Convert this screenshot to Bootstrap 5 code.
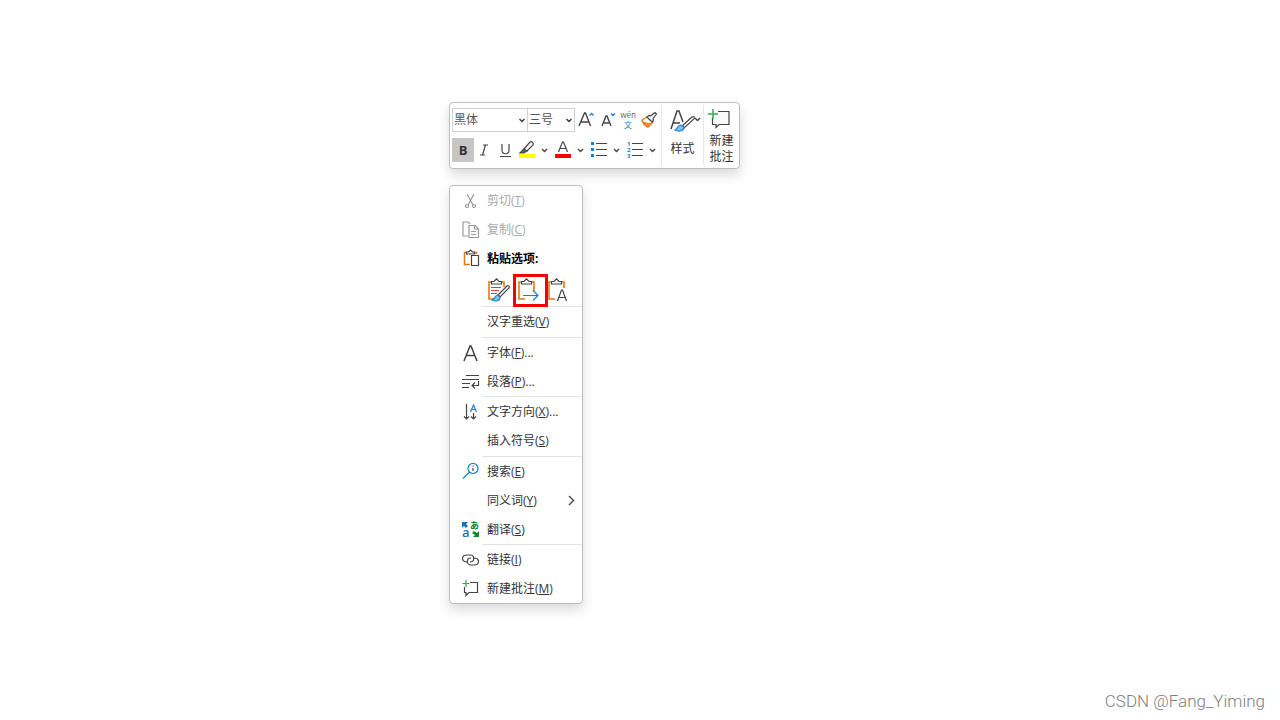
<!DOCTYPE html>
<html lang="zh-CN">
<head>
<meta charset="utf-8">
<meta name="viewport" content="width=device-width, initial-scale=1">
<title>右键菜单</title>
<link href="https://cdn.jsdelivr.net/npm/bootstrap@5.3.0/dist/css/bootstrap.min.css" rel="stylesheet">
<style>
  body { font: 12px/16px "Open Sans", "Noto Sans CJK SC", sans-serif; color: #333; background: #fff; }
  .stage { padding: 102px 16px 0 calc(35% + 1px); }
  .panel { width: fit-content; background: #fff; border: 1px solid #bdbdbd; border-radius: 4px; box-shadow: 0 6px 12px rgba(0,0,0,.14); }
  svg { display: block; flex: none; fill: none; stroke: #444; stroke-width: 1.2; }
  button { color: inherit; background: none; border: 0; padding: 0; font: inherit; }
  .tools { padding: 5px 0 6px 2px; }
  .tool-main { width: 209px; gap: 6px; }
  .tool-row { height: 24px; }
  .font-box { height: 24px; padding: 0 14px 0 1px; border: 1px solid #d0d0d0; border-radius: 0; font: inherit; color: #555; background-size: 8px 8px; background-position: right 1px center;
    background-image: url("data:image/svg+xml,%3Csvg xmlns='http://www.w3.org/2000/svg' viewBox='0 0 8 8'%3E%3Cpath d='M1.500 3L4 5.500 6.500 3' fill='none' stroke='%23333' stroke-width='1.3'/%3E%3C/svg%3E"); }
  .font-name { width: 76px; }
  .font-size { width: 48px; margin-left: -1px; }
  .tool { width: 21px; height: 24px; display: flex; align-items: center; justify-content: center; }
  .tool.active { width: 22px; background: #c6c6c6; font-size: 13px; }
  .split { width: 36px; height: 24px; display: flex; align-items: center; }
  .big { width: 36px; border-left: 1px solid #e8e8e8; margin: -3px 0; }
  .big.wide { width: 42px; }
  .ctx { width: 134px; margin-top: 16px; }
  .entry { display: flex; align-items: center; width: 100%; height: 29px; padding-left: 12px; text-align: left; white-space: nowrap; }
  .entry.tall { height: 30px; }
  .entry .pic { width: 25px; flex: none; }
  .entry:disabled { color: #a9a9a9; }
  .rule { margin: 0 0 0 32px; border: 0; border-top: 1px solid #e2e2e2; opacity: 1; }
  .paste-row { height: 33px; padding-left: 34px; }
  .paste { width: 30px; height: 33px; padding-left: 2px; position: relative; }
  .paste.marked::after { content: ""; position: absolute; inset: 1px -4px -1px -1px; border: 3px solid #f40000; }
  .sign { font: 300 17px/20px Roboto, sans-serif; color: #808080; right: 15px; bottom: 9px; }
</style>
</head>
<body>
<main class="stage min-vh-100">
  <div class="panel tools d-flex" role="toolbar" aria-label="格式">
    <div class="tool-main d-flex flex-column">
      <div class="tool-row d-flex">
        <select class="form-select font-box font-name" aria-label="字体"><option>黑体</option></select>
        <select class="form-select font-box font-size" aria-label="字号"><option>三号</option></select>
        <button class="tool" aria-label="增大字号"><svg width="18" height="18"><path d="M2 15L7.500 2h1l5 13M4 11h8" stroke-width="1.4"/><path d="M12.500 4.500l2-2 2 2" stroke="#1683d0" stroke-width="1.4"/></svg></button>
        <button class="tool" aria-label="减小字号"><svg width="18" height="18"><path d="M4 15L8 5h1l4 10M6 12h5" stroke-width="1.4"/><path d="M13 2.500l2 2 2-2" stroke="#1683d0" stroke-width="1.4"/></svg></button>
        <button class="tool" aria-label="拼音指南"><svg width="20" height="20"><g font-family="Noto Sans CJK SC" stroke="none" text-anchor="middle"><text x="10" y="8" font-size="8" fill="#666">wén</text><text x="10" y="18" font-size="8" fill="#1683d0">文</text></g></svg></button>
        <button class="tool" aria-label="格式刷"><svg width="18" height="18"><path d="M7 6L2 9c1 4 4 6 6 7l5-5z" fill="#fff" stroke="#e87813" stroke-width="1.400"/><path d="M4 11.500l6.500 1.500L8 16c-2-1-3-2-4-4.500z" fill="#f5a04c" stroke="#e87813"/><path d="M7 6l2-1.500 1.500.5 4.500-3.500L16.500 3 13 7.500l.5 1.500-1.500 2z" fill="#fff"/></svg></button>
      </div>
      <div class="tool-row d-flex">
        <button class="tool active fw-bold" aria-label="加粗">B</button>
        <button class="tool" aria-label="倾斜"><svg width="12" height="14"><path d="M4 2h5M1 12h5M6.500 2l-3 10"/></svg></button>
        <button class="tool" aria-label="下划线"><svg width="12" height="16"><path d="M2 2v6c0 5 7 5 7 0V2M0 14.500h11"/></svg></button>
        <button class="split" aria-label="突出显示"><svg width="36" height="20"><path d="M3 14h16v4H3z" fill="#ff0" stroke="none"/><path d="M8 9l6-7c2-1 4 1 3 3l-6 6-4 1z" fill="#fff"/><path d="M8 9l3 2-3 2H4z" fill="#666"/><path d="M26 9l2.500 2.500L31 9" stroke-width="1.4"/></svg></button>
        <button class="split" aria-label="字体颜色"><svg width="36" height="20"><path d="M3 14h16v4H3z" fill="#f00" stroke="none"/><path d="M6.500 12l4-10h1l4 10M8 8.500h6"/><path d="M26 9l2.500 2.500L31 9" stroke-width="1.4"/></svg></button>
        <button class="split" aria-label="项目符号"><svg width="36" height="20"><path d="M3 2h3v3H3zM3 8h3v3H3zM3 14h3v3H3z" fill="#1683d0" stroke="none"/><path d="M8 3.500h11M8 9.500h11M8 15.500h11"/><path d="M26 9l2.500 2.500L31 9" stroke-width="1.4"/></svg></button>
        <button class="split" aria-label="编号"><svg width="36" height="20"><g font-size="6" font-weight="700" fill="#1683d0" stroke="none"><text x="3" y="6">1</text><text x="3" y="12">2</text><text x="3" y="18">3</text></g><path d="M8 3.500h11M8 9.500h11M8 15.500h11"/><path d="M26 9l2.500 2.500L31 9" stroke-width="1.4"/></svg></button>
      </div>
    </div>
    <button class="big wide d-flex flex-column align-items-center"><svg width="36" height="32" viewBox="2 3 36 32"><path d="M8 27L14 9h2l4 11M10 21h7" stroke-width="1.5"/><path d="M29 15L19 24l2 2 10-9c1-2 0-3-2-2z" fill="#fff"/><path d="M18 23c-4 0-3 4-6 5 4 2 9 1 9-3z" fill="#83beec" stroke="#1683d0"/><path d="M32 16l2.500 2.500L37 16" stroke-width="1.400"/></svg><span class="mt-1">样式</span></button>
    <button class="big d-flex flex-column align-items-center"><svg width="28" height="28" viewBox="3 2 28 28"><path d="M13 8.500h11v13H14l-3 3v-3H7.500v-7" fill="#fafafa"/><path d="M8 6v10M3 11h10" stroke="#3ca653" stroke-width="1.5"/></svg><span>新建</span><span>批注</span></button>
  </div>

  <div class="panel ctx" role="menu">
    <button class="entry" disabled><span class="pic"><svg width="18" height="18"><path d="M5 2l6 11M12 2L6 13" stroke="#999"/><circle cx="5" cy="14" r="1.500" stroke="#999"/><circle cx="12" cy="14" r="1.500" stroke="#999"/></svg></span><span>剪切(<u>T</u>)</span></button>
    <button class="entry" disabled><span class="pic"><svg width="18" height="18"><path d="M6 15H1V1h5l2 2M7 4.500h6l3.500 3.500v8.500H7zM12.500 4.500V8h4M9 10.500h5M9 13.500h5" stroke="#999"/></svg></span><span>复制(<u>C</u>)</span></button>
    <div class="entry fw-bold text-black"><span class="pic"><svg width="18" height="20"><path d="M5 3.500H2.500v12H8M12 3.500h2.500V5" stroke="#e87813" stroke-width="1.500"/><path d="M4.500 5V3h2l2-2 2 2h2v2zM9.500 6.500h7v10h-7z" fill="#fff"/></svg></span><span>粘贴选项:</span></div>
    <div class="paste-row d-flex">
      <button class="paste" aria-label="保留源格式"><svg width="24" height="24"><path d="M6 4H3v17h6M15 4h3v5" stroke="#e87813" stroke-width="1.600"/><path d="M5.500 6V3.500H8L10.500.8 13 3.500h2.500V6z" fill="#fff"/><path d="M5 9.500h10M5 15.500h6" stroke="#1683d0"/><path d="M5 12.500h8" stroke="#e0533c"/><path d="M21 8l-9 9 2 2 9-9c1-2-1-3-2-2z" fill="#fff"/><path d="M12 17c-4 0-2 4-6 5 4 2 8 1 8-3z" fill="#83beec" stroke="#1683d0"/></svg></button>
      <button class="paste marked" aria-label="合并格式"><svg width="24" height="24"><path d="M6 4H3v17h6M15 4h3v9" stroke="#e87813" stroke-width="1.600"/><path d="M5.500 6V3.500H8L10.500.8 13 3.500h2.500V6z" fill="#fff"/><path d="M7 17.500h15M17 12.500l5 5-5 5" stroke="#1683d0"/></svg></button>
      <button class="paste" aria-label="只保留文本"><svg width="24" height="24"><path d="M6 4H3v17h6M15 4h3v6" stroke="#e87813" stroke-width="1.600"/><path d="M5.500 6V3.500H8L10.500.8 13 3.500h2.500V6z" fill="#fff"/><path d="M11.500 23l4-11h1l4 11M13 19.500h6"/></svg></button>
    </div>
    <hr class="rule">
    <button class="entry tall"><span class="pic"></span><span>汉字重选(<u>V</u>)</span></button>
    <hr class="rule">
    <button class="entry"><span class="pic"><svg width="18" height="18"><path d="M2 17L8 2h1l6 15M4 11.500h9" stroke-width="1.500"/></svg></span><span>字体(<u>F</u>)...</span></button>
    <button class="entry"><span class="pic"><svg width="18" height="18" viewBox="0 1 18 18"><path d="M4 3.500h13M0 7.500h17M0 11.500h8M0 15.500h7M16.500 9v4.500H10M13 10.500l-3 3 3 3"/></svg></span><span>段落(<u>P</u>)...</span></button>
    <hr class="rule">
    <button class="entry"><span class="pic"><svg width="18" height="18"><path d="M4.500 1v15M2 13.500l2.500 2.500L7 13.500M11.500 10v6M9 13.500l2.500 2.500 2.500-2.500"/><path d="M8.500 9l3-7 3 7M9.500 6.500h4" stroke="#1683d0"/></svg></span><span>文字方向(<u>X</u>)...</span></button>
    <button class="entry tall"><span class="pic"></span><span>插入符号(<u>S</u>)</span></button>
    <hr class="rule">
    <button class="entry"><span class="pic"><svg width="18" height="18" viewBox="0 1 18 18"><circle cx="11" cy="6.500" r="5" stroke="#1683d0"/><path d="M7.500 10L1 16.500" stroke="#1683d0"/><path d="M11 6v3M11 3.500v1"/></svg></span><span>搜索(<u>E</u>)</span></button>
    <button class="entry"><span class="pic"></span><span>同义词(<u>Y</u>)</span><svg class="ms-auto me-1" width="12" height="12"><path d="M3 1l4.500 4.500L3 10" stroke-width="1.400"/></svg></button>
    <button class="entry"><span class="pic"><svg class="overflow-visible" width="18" height="20"><g stroke="none"><text x="0" y="17" font-size="13" font-weight="600" fill="#1372c4">a</text><text x="8" y="9" font-size="9" font-weight="700" fill="#13852c">あ</text></g><path d="M0 2v6l2-2 2 2 2-2-2-2 2-2z" fill="#1372c4" stroke="none"/><path d="M17 17v-6l-2 2-3-2-2 2 3 2-2 2z" fill="#13852c" stroke="none"/></svg></span><span>翻译(<u>S</u>)</span></button>
    <hr class="rule">
    <button class="entry"><span class="pic"><svg width="18" height="18"><path d="M5 11C-1 11-1 4 5 4h3c5 0 5 7 0 7M12 7c6 0 6 7 0 7H9C4 14 4 7 9 7"/></svg></span><span>链接(<u>I</u>)</span></button>
    <button class="entry"><span class="pic"><svg width="18" height="18" viewBox="0 1 18 18"><path d="M8 3.500h7.500v10H7l-3 3v-3H2.500V8"/><path d="M4 1v7M.5 4.500h7" stroke="#3ca653"/></svg></span><span>新建批注(<u>M</u>)</span></button>
  </div>
</main>
<div class="sign position-absolute">CSDN @Fang_Yiming</div>
<script src="https://cdn.jsdelivr.net/npm/bootstrap@5.3.0/dist/js/bootstrap.bundle.min.js"></script>
</body>
</html>
